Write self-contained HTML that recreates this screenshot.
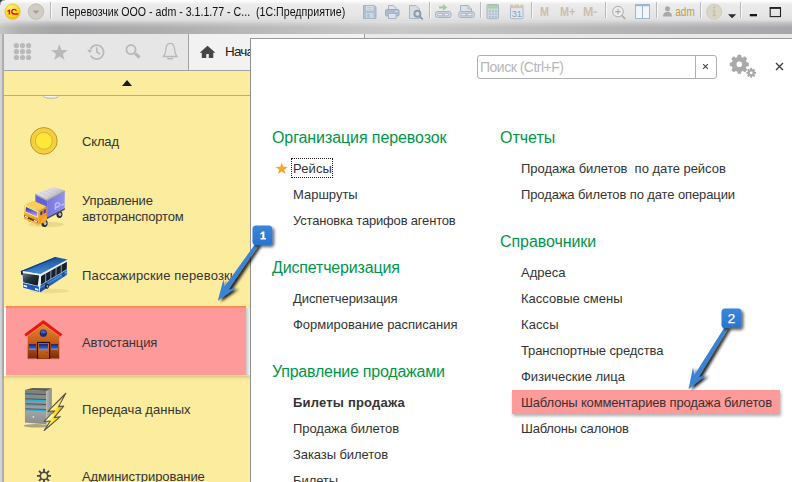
<!DOCTYPE html>
<html>
<head>
<meta charset="utf-8">
<style>
html,body{margin:0;padding:0;}
body{width:792px;height:482px;overflow:hidden;position:relative;background:#fff;font-family:"Liberation Sans",sans-serif;color:#2b2b2b;}
.abs{position:absolute;}
.t{position:absolute;white-space:nowrap;font-size:13px;line-height:16px;letter-spacing:-0.18px;color:#343434;}
.h{position:absolute;white-space:nowrap;font-size:16px;line-height:20px;letter-spacing:-0.16px;color:#00964a;}
.sb{position:absolute;white-space:nowrap;font-size:13px;line-height:16px;letter-spacing:-0.15px;color:#343434;}
</style>
</head>
<body>
<!-- title bar -->
<div class="abs" id="titlebar" style="left:0;top:0;width:792px;height:34px;background:linear-gradient(#ffffff 0,#f8f8f8 2px,#ececec 4px,#e8e8e8 12px,#e0e0e0 20px,#d4d4d4 21px);"></div>
<div class="abs" id="band" style="left:0;top:21px;width:792px;height:13px;background:linear-gradient(rgba(255,255,255,0.500) 0,rgba(255,255,255,0.220) 3px,rgba(255,255,255,0) 7px),linear-gradient(90deg,#c4c4c4 0,#b0b0b0 2.500%,#a5a5a7 7%,#adadaf 20%,#bbbbbb 35%,#c9c9c9 50%,#c0c0c0 62%,#b4b4b6 78%,#a7a7ab 100%);"></div>
<div class="abs" style="left:0;top:34px;width:4px;height:448px;background:linear-gradient(90deg,#d6d6d6 0,#d0d0d0 1.500px,#b2b2b8 2px,#acacb2 3.500px,#c0c0c0 4px);"></div>
<svg class="abs" style="left:0;top:0" width="6" height="6" viewBox="0 0 6 6"><path d="M0 0h4.500A4.500 4.500 0 0 0 0 4.500z" fill="#3a3a3a"/><path d="M0 5A5 5 0 0 1 5 0" fill="none" stroke="#8a8a8a" stroke-width="0.800"/></svg>
<!-- 1C logo -->
<svg class="abs" style="left:4px;top:3px" width="18" height="18" viewBox="0 0 18 18"><defs><radialGradient id="lg" cx="0.42" cy="0.32" r="0.75"><stop offset="0" stop-color="#fff58a"/><stop offset="0.55" stop-color="#fde022"/><stop offset="1" stop-color="#eab600"/></radialGradient></defs><circle cx="8.600" cy="8.600" r="7.700" fill="url(#lg)" stroke="#e4b41c" stroke-width="0.600"/><path d="M3.400 7.800l1.700-1.300h1.100v5.100h-1.600v-3.300l-1.200 0.700z" fill="#e01018"/><path d="M12.300 8.100a2.300 2.300 0 1 0 -2.300 2.900h4.300" fill="none" stroke="#e01018" stroke-width="1.350"/></svg>
<svg class="abs" style="left:27px;top:3px" width="18" height="18" viewBox="0 0 18 18"><circle cx="9" cy="8.6" r="7.8" fill="#d2cdc4" stroke="#bdb7ac" stroke-width="0.8"/><path d="M5.6 7.4h6.8L9 11z" fill="#a39d92"/></svg>
<div class="abs" style="left:50px;top:2px;width:1px;height:17px;background:#b8b8b8;"></div>
<div class="abs" style="left:51px;top:2px;width:1px;height:17px;background:#fafafa;"></div>
<div class="abs" id="title" style="left:61px;top:4px;font-size:12px;line-height:16px;color:#111;white-space:nowrap;transform:scaleX(0.886);transform-origin:0 0;">Перевозчик ООО - adm - 3.1.1.77 - С...&nbsp; (1С:Предприятие)</div>


<!-- titlebar icons -->
<svg class="abs" style="left:0;top:0" width="792" height="34" viewBox="0 0 792 34" font-family="Liberation Sans">
<g stroke="#b9b9b9" stroke-width="1">
<path d="M429.5 2v16M480.5 2v16M531.5 2v16M605.5 2v16M656.5 2v16M700.5 2v16M740.5 2v16"/>
</g>
<g stroke="#f8f8f8" stroke-width="1">
<path d="M430.5 2v16M481.5 2v16M532.5 2v16M606.5 2v16M657.5 2v16M701.5 2v16M741.5 2v16"/>
</g>
<!-- floppy -->
<path d="M363.5 5.5h11l1.5 1.5v11.5h-12.5z" fill="#afc0d3" stroke="#a2b4c9"/>
<rect x="366" y="6" width="7.5" height="4.6" fill="#d9e0e9"/><path d="M367 7.500h5.500M367 9.200h5.500" stroke="#b4c2d2" stroke-width="0.700"/>
<rect x="366" y="13" width="7.5" height="5" fill="#ced8dc"/>
<rect x="367.3" y="14" width="2" height="3.4" fill="#a3b9d0"/>
<!-- printer -->
<path d="M388.500 10v-4.500h5l2.500 2.500v2z" fill="#dfe3e8" stroke="#a6b5c7"/>
<rect x="385.5" y="9.5" width="13.5" height="6.5" rx="1.2" fill="#acbbcd" stroke="#9aacc1"/><rect x="395.500" y="10.800" width="2" height="1" fill="#e8edf2"/>
<rect x="388.5" y="13.5" width="7.5" height="5" fill="#dfe3e8" stroke="#a6b5c7"/>
<!-- preview -->
<path d="M409.5 5.5h6.5l3.5 3.500v9.500h-10z" fill="#d9dde3" stroke="#a6b5c7"/>
<circle cx="417.400" cy="13.800" r="3" fill="#d9dde3" stroke="#8a9aad" stroke-width="1.900"/>
<path d="M419.800 16.400l2.400 2.500" stroke="#8a9aad" stroke-width="2" stroke-linecap="round"/>
<!-- tray arrow -->
<path d="M439 6.300h4v-2.300l4.300 3.400-4.300 3.400v-2.300h-4z" fill="#a3cb9f"/>
<rect x="435.500" y="11.500" width="15.500" height="6" rx="2" fill="#d2dae4" stroke="#a3b3c6"/>
<rect x="437.700" y="13.300" width="11.100" height="2.500" rx="0.800" fill="#eef1f5" stroke="#93a5ba" stroke-width="0.800"/>
<rect x="441.800" y="13.600" width="2.900" height="1.900" fill="#b4c1d0"/>
<!-- tray page -->
<path d="M460.500 11.500v-6h7.500l3.500 3.500v2.500z" fill="#dde1e6" stroke="#a3b3c6"/>
<path d="M468 5.500v3.500h3.500" fill="none" stroke="#a3b3c6" stroke-width="0.800"/>
<rect x="458.800" y="11.500" width="15.500" height="6" rx="2" fill="#d2dae4" stroke="#a3b3c6"/>
<rect x="461" y="13.300" width="11.100" height="2.500" rx="0.800" fill="#eef1f5" stroke="#93a5ba" stroke-width="0.800"/>
<rect x="465.100" y="13.600" width="2.900" height="1.900" fill="#b4c1d0"/>
<!-- calculator -->
<rect x="487" y="4.500" width="11.500" height="14.200" rx="1" fill="#ccd7e2" stroke="#a6b7c9"/>
<rect x="487.500" y="5" width="10.500" height="3.600" fill="#abd3a0"/>
<g fill="#a9b9ca"><rect x="489.2" y="10.4" width="1.6" height="1.6"/><rect x="489.2" y="13.2" width="1.6" height="1.6"/><rect x="489.2" y="16.0" width="1.6" height="1.6"/><rect x="492.2" y="10.4" width="1.6" height="1.6"/><rect x="492.2" y="13.2" width="1.6" height="1.6"/><rect x="492.2" y="16.0" width="1.6" height="1.6"/><rect x="495.2" y="10.4" width="1.6" height="1.6"/><rect x="495.2" y="13.2" width="1.6" height="1.6"/><rect x="495.2" y="16.0" width="1.6" height="1.6"/></g>
<!-- calendar -->
<rect x="510.500" y="5.500" width="12.500" height="13.200" rx="1" fill="#e2e7ed" stroke="#a6b7c9"/>
<rect x="510.500" y="4.600" width="12.500" height="3.600" fill="#d4c4b6"/>
<rect x="513.200" y="3.800" width="1.200" height="2.400" fill="#f0ece8"/><rect x="519.200" y="3.800" width="1.200" height="2.400" fill="#f0ece8"/>
<text x="516.800" y="17.200" font-size="9.500" text-anchor="middle" fill="#919dab" letter-spacing="-0.300">31</text>
<!-- M -->
<g font-weight="bold" font-size="12" fill="#cfbcb0">
<text x="540" y="16.400" textLength="9" lengthAdjust="spacingAndGlyphs">M</text>
<text x="560" y="16.400" textLength="15.500" lengthAdjust="spacingAndGlyphs">M+</text>
<text x="583" y="16.400" textLength="14.500" lengthAdjust="spacingAndGlyphs">M-</text>
</g>
<!-- zoom -->
<circle cx="618" cy="11.600" r="5.300" fill="#eeeeee" stroke="#ababab" stroke-width="1"/>
<path d="M615.200 11.600h5.600M618 8.800v5.600" stroke="#ababab" stroke-width="1.100"/>
<path d="M622 15.800l2.800 2.800" stroke="#ababab" stroke-width="1.600" stroke-linecap="round"/>
<!-- panel -->
<rect x="635.500" y="4.500" width="14" height="14" fill="#f3f5f8" stroke="#9db7d2"/>
<rect x="635" y="4" width="15" height="2.200" fill="#9db7d2"/>
<path d="M642.500 6v12.500" stroke="#9db7d2"/>
<!-- person -->
<circle cx="667.500" cy="8.800" r="2.500" fill="#a9a9a9"/>
<path d="M663 16.400c0-3 1.800-4.600 4.500-4.600s4.500 1.600 4.500 4.600z" fill="#a9a9a9"/>
<text x="675.300" y="16" font-size="12" fill="#c29d3e" textLength="19.500" lengthAdjust="spacingAndGlyphs">adm</text>
<!-- info -->
<circle cx="714.100" cy="11.700" r="7.600" fill="#dcd5c7" stroke="#cfc7b7" stroke-width="0.800"/>
<circle cx="714.300" cy="7.600" r="1.200" fill="#bcc7a6"/>
<path d="M712.400 10h2.800v5.200h1v1h-4v-1h1.200v-4.200h-1z" fill="#bcc7a6"/>
<!-- dropdown -->
<path d="M728 14.200h8.200l-4.100 4z" fill="#2a2a2a"/>
<rect x="749.800" y="14" width="7.200" height="2.300" fill="#161616"/>
<rect x="770.200" y="8" width="10.300" height="8.600" fill="none" stroke="#222" stroke-width="1.100"/>
<rect x="769.700" y="7" width="11.300" height="1.800" fill="#222"/>
</svg>

<!-- toolbar -->
<div class="abs" style="left:4px;top:34px;width:184px;height:36px;background:#e6e6e6;"></div>
<div class="abs" style="left:188px;top:34px;width:1px;height:36px;background:#a2a2a4;"></div>
<div class="abs" style="left:189px;top:34px;width:175px;height:37px;background:#f2f2f2;"></div>
<div class="abs" style="left:364px;top:34px;width:1px;height:36px;background:#9a9a9a;"></div>
<div class="abs" style="left:365px;top:34px;width:427px;height:36px;background:#e9e9e9;"></div>
<div class="abs" style="left:4px;top:70px;width:246px;height:1px;background:#a2a2a6;"></div>


<!-- toolbar icons -->
<svg class="abs" style="left:0;top:0" width="792" height="72" viewBox="0 0 792 72">
<g fill="#b9b9b9"><circle cx="16.4" cy="45.6" r="2.6"/><circle cx="16.4" cy="51.6" r="2.6"/><circle cx="16.4" cy="57.5" r="2.6"/><circle cx="22.5" cy="45.6" r="2.6"/><circle cx="22.5" cy="51.6" r="2.6"/><circle cx="22.5" cy="57.5" r="2.6"/><circle cx="28.6" cy="45.6" r="2.6"/><circle cx="28.6" cy="51.6" r="2.6"/><circle cx="28.6" cy="57.5" r="2.6"/></g>
<polygon points="59.40,44.20 61.52,50.09 67.77,50.28 62.82,54.11 64.57,60.12 59.40,56.60 54.23,60.12 55.98,54.11 51.03,50.28 57.28,50.09" fill="#b9b9b9"/>
<g fill="none" stroke="#b9b9b9" stroke-width="1.7">
<path d="M90.3 49.2A7 7 0 1 1 90.6 55.6"/>
<path d="M96.9 47.2v4.8l3.2 2.2" stroke-width="1.6"/>
</g>
<path d="M87.200 49.800h5.200l-2.600 3.400z" fill="#b9b9b9"/>
<circle cx="131" cy="49.6" r="4.6" fill="none" stroke="#b9b9b9" stroke-width="1.8"/>
<path d="M134.300 52.900l1 0.900" stroke="#b9b9b9" stroke-width="1.600"/><path d="M135.300 53.600l4.300 3.900" stroke="#b9b9b9" stroke-width="3.200"/>
<path d="M170.200 43.400c-2.500 0-3.800 2.100-4.200 4.900l-0.700 4.400c-0.300 1.600-1.100 2.700-2.100 3.800h14c-1-1.100-1.800-2.200-2.100-3.800l-0.700-4.400c-0.400-2.800-1.700-4.900-4.200-4.900z" fill="none" stroke="#b9b9b9" stroke-width="1.300" stroke-linejoin="round"/>
<path d="M167.300 58.300c1.800 0.700 4 0.700 5.800 0" fill="none" stroke="#b9b9b9" stroke-width="1.500"/>
<!-- home -->
<path d="M207.5 45.7l7.9 7h-2.1v5.4h-4.5v-4h-2.5v4h-4.5v-5.4h-2.1z" fill="#464646"/>
</svg>
<div class="abs" style="left:225px;top:44px;font-size:13.500px;line-height:16px;color:#222;white-space:nowrap;letter-spacing:-0.800px;">Нача</div>

<!-- sidebar -->
<div class="abs" id="sidebar" style="left:4px;top:71px;width:246px;height:411px;background:#fbec9e;"></div>
<div class="abs" style="left:4px;top:95px;width:246px;height:1px;background:#b9ae74;"></div>
<svg class="abs" style="left:40px;top:96px" width="22" height="4" viewBox="40 96 22 4"><path d="M43.200 96h15.400c-1.500 1.800-4 2.200-7.700 2.200s-6.200-0.400-7.700-2.200z" fill="#f4f4f6"/><path d="M43.200 96.200c1.500 1.600 4 2 7.700 2s6.200-0.400 7.700-2" fill="none" stroke="#9a9aa0" stroke-width="0.700"/></svg>
<div class="abs" style="left:122px;top:80px;width:0;height:0;border-left:5px solid transparent;border-right:5px solid transparent;border-bottom:6px solid #1a1a1a;"></div>

<!-- highlight -->
<div class="abs" style="left:4px;top:308px;width:246px;height:68px;background:#fdfdfd;box-shadow:0 1px 3px rgba(120,100,40,0.350);"></div>
<div class="abs" style="left:246px;top:308px;width:4px;height:68px;background:linear-gradient(90deg,#c4c8c8,#f6f6f6);"></div>
<div class="abs" style="left:6px;top:375px;width:244px;height:1px;background:#d6d6d6;"></div>
<div class="abs" id="hl1" style="left:6px;top:306px;width:240px;height:69px;background:#ff9a9a;"></div>
<div class="abs" style="left:6px;top:306px;width:240px;height:2px;background:#ff8a52;"></div>

<div class="sb" style="left:82px;top:134px;">Склад</div>
<div class="sb" style="left:82px;top:193px;">Управление</div>
<div class="sb" style="left:82px;top:209px;">автотранспортом</div>
<div class="sb" style="left:82px;top:268px;letter-spacing:0.16px;">Пассажирские перевозки</div>
<div class="sb" style="left:82px;top:335px;">Автостанция</div>
<div class="sb" style="left:82px;top:402px;letter-spacing:0.05px;">Передача данных</div>
<div class="sb" style="left:82px;top:469px;letter-spacing:-0.07px;">Администрирование</div>


<!-- sidebar icons -->
<svg class="abs" style="left:10px;top:110px" width="80" height="60" viewBox="0 0 643 482">
<circle cx="272" cy="248" r="107" fill="#f6cf3e" stroke="#b8982a" stroke-width="8"/>
<circle cx="272" cy="248" r="68" fill="#fde838" stroke="#d6ac30" stroke-width="7"/>
</svg>

<svg class="abs" style="left:20px;top:182px" width="50" height="50" viewBox="0 0 482 482">
<defs>
<linearGradient id="trRoof" x1="0" y1="0" x2="1" y2="0.600"><stop offset="0" stop-color="#f2f2f4"/><stop offset="0.600" stop-color="#d4d4da"/><stop offset="1" stop-color="#a6a6b0"/></linearGradient>
<linearGradient id="trSide" x1="0" y1="0" x2="1" y2="0"><stop offset="0" stop-color="#7676e2"/><stop offset="1" stop-color="#9292ee"/></linearGradient>
<linearGradient id="trCab" x1="0" y1="0" x2="0" y2="1"><stop offset="0" stop-color="#ffc038"/><stop offset="1" stop-color="#f08c10"/></linearGradient>
<linearGradient id="trWin" x1="0" y1="0" x2="0" y2="1"><stop offset="0" stop-color="#30308c"/><stop offset="1" stop-color="#b4b4ee"/></linearGradient>
</defs>
<ellipse cx="250" cy="410" rx="170" ry="26" fill="#c8b86c" opacity="0.350"/>
<!-- wheels -->
<ellipse cx="380" cy="312" rx="29" ry="35" fill="#26262a"/><ellipse cx="385" cy="312" rx="14" ry="19" fill="#bcbcc4"/>
<ellipse cx="236" cy="398" rx="30" ry="36" fill="#26262a"/><ellipse cx="242" cy="398" rx="14" ry="20" fill="#bcbcc4"/>
<ellipse cx="92" cy="360" rx="16" ry="22" fill="#26262a"/>
<!-- chassis -->
<polygon points="258,336 432,248 432,268 258,358" fill="#4c4c54"/>
<!-- box -->
<polygon points="148,116 264,172 264,336 148,256" fill="#6262d6"/>
<polygon points="262,172 432,86 430,252 262,342" fill="url(#trSide)"/>
<polygon points="148,112 330,48 432,82 262,170" fill="url(#trRoof)"/>
<path d="M190,97 L300,150 M232,82 L340,131 M276,67 L380,111" stroke="#bcbcc6" stroke-width="6" fill="none" opacity="0.800"/>
<polygon points="148,112 262,168 262,182 148,126" fill="#b2b2bc"/>
<polygon points="262,168 432,82 432,94 262,182" fill="#9c9ca8"/>
<path d="M342 268 v-58 c28,-22 52,-4 34,22 l-26,14 M398 226 l24,-14" stroke="#c4c4f8" stroke-width="15" fill="none" opacity="0.850"/>
<!-- cab -->
<polygon points="50,216 130,180 256,236 186,278" fill="#ffcc52"/>
<polygon points="44,222 184,280 176,412 38,338" fill="url(#trCab)"/>
<polygon points="184,280 256,238 258,346 246,382 176,412" fill="#f59c1c"/>
<path d="M176,412 L246,382 L258,346 L258,330 C225,335 205,360 200,400 Z" fill="#f8ac28"/>
<polygon points="50,230 178,286 170,344 44,288" fill="#ececf6"/>
<polygon points="58,242 170,292 164,334 52,284" fill="url(#trWin)"/>
<polygon points="196,290 216,278 216,312 196,324" fill="#3a3a94"/>
<polygon points="228,270 248,258 248,294 228,306" fill="#3a3a94"/>
<polygon points="40,318 172,378 172,398 40,338" fill="#5a3e1e"/>
<polygon points="46,324 78,338 78,350 46,336" fill="#f4f8ff"/>
<polygon points="134,364 166,378 166,392 134,378" fill="#e4eeff"/>
<polygon points="38,338 174,400 174,418 38,356" fill="#ffb838"/>
</svg>

<svg class="abs" style="left:18px;top:250px" width="54" height="50" viewBox="0 0 521 482">
<defs>
<linearGradient id="busRoof" x1="0.300" y1="0" x2="0.600" y2="1"><stop offset="0" stop-color="#16448a"/><stop offset="0.500" stop-color="#2a6cb8"/><stop offset="1" stop-color="#4e94d8"/></linearGradient>
<linearGradient id="busLow" x1="0" y1="0" x2="0" y2="1"><stop offset="0" stop-color="#3484da"/><stop offset="1" stop-color="#154698"/></linearGradient>
<linearGradient id="busWs" x1="0" y1="0" x2="1" y2="1"><stop offset="0" stop-color="#6c8890"/><stop offset="0.450" stop-color="#24343c"/><stop offset="1" stop-color="#0c141a"/></linearGradient>
</defs>
<ellipse cx="300" cy="395" rx="190" ry="22" fill="#c8b86c" opacity="0.300"/>
<!-- side -->
<polygon points="213,232 478,92 475,238 208,412" fill="#f0f4f8"/>
<polygon points="224,250 472,112 471,186 220,336" fill="#18222c"/>
<path d="M268,226 L266,308 M318,198 L316,278 M368,170 L366,248 M418,142 L417,218" stroke="#d4dde6" stroke-width="6"/>
<polygon points="218,340 474,188 474,238 208,412" fill="url(#busLow)"/>
<polygon points="216,360 474,208 474,218 216,372" fill="#8cc0f0" opacity="0.500"/>
<!-- roof -->
<polygon points="36,200 360,68 478,92 213,234" fill="url(#busRoof)"/>
<polygon points="36,200 360,68 376,71 58,204" fill="#123c80"/>
<!-- front -->
<polygon points="28,204 215,232 210,412 46,366" fill="#eef2f6"/>
<polygon points="42,222 204,246 190,344 50,312" fill="url(#busWs)"/>
<polygon points="48,318 200,352 206,406 50,364" fill="#1c5cb8"/>
<polygon points="54,336 88,345 88,362 54,353" fill="#f0f6ff"/>
<polygon points="164,366 198,375 198,394 164,384" fill="#f0f6ff"/>
<polygon points="26,202 44,196 48,238 32,242" fill="#18181c"/>
<polygon points="222,262 234,256 236,300 224,306" fill="#18181c"/>
<!-- wheels -->
<ellipse cx="280" cy="350" rx="18" ry="27" fill="#1a1a1e"/><ellipse cx="284" cy="350" rx="8" ry="13" fill="#a0a6ae"/>
<ellipse cx="440" cy="236" rx="12" ry="19" fill="#1a1a1e"/><ellipse cx="443" cy="236" rx="5" ry="9" fill="#a0a6ae"/>
</svg>

<svg class="abs" style="left:10px;top:310px" width="80" height="60" viewBox="0 0 643 482">
<defs>
<linearGradient id="hsBody" x1="0" y1="0" x2="0" y2="1"><stop offset="0" stop-color="#e88a34"/><stop offset="0.55" stop-color="#c45a16"/><stop offset="1" stop-color="#7a2c08"/></linearGradient>
<linearGradient id="hsWin" x1="0" y1="0" x2="0" y2="1"><stop offset="0" stop-color="#16207a"/><stop offset="0.6" stop-color="#2a56b8"/><stop offset="1" stop-color="#6a9ee4"/></linearGradient>
<linearGradient id="hsDoor" x1="0" y1="0" x2="0" y2="1"><stop offset="0" stop-color="#e0782a"/><stop offset="1" stop-color="#a84810"/></linearGradient>
</defs>
<polygon points="142,205 268,108 396,205 396,392 142,392" fill="url(#hsBody)"/>
<rect x="140" y="386" width="258" height="10" fill="#c8706a" opacity="0.5"/>
<path d="M122,204 L268,96 L414,204" fill="none" stroke="#e81818" stroke-width="24" stroke-linejoin="miter"/>
<path d="M150,186 L268,98 L386,186" fill="none" stroke="#ff9a2a" stroke-width="6" opacity="0.8" transform="translate(0,18)"/>
<circle cx="268" cy="186" r="29" fill="#1a2a78"/>
<ellipse cx="268" cy="176" rx="22" ry="13" fill="#5a7ad0" opacity="0.7"/>
<rect x="152" y="274" width="58" height="46" fill="url(#hsWin)"/>
<rect x="330" y="274" width="56" height="46" fill="url(#hsWin)"/>
<rect x="217" y="256" width="106" height="136" fill="#1c0c04"/>
<rect x="226" y="266" width="88" height="126" fill="url(#hsDoor)"/>
<rect x="232" y="272" width="74" height="50" fill="url(#hsWin)"/>
<rect x="292" y="338" width="10" height="5" fill="#7a2c08"/>
</svg>

<svg class="abs" style="left:10px;top:375px" width="80" height="60" viewBox="0 0 643 482">
<defs>
<linearGradient id="svFront" x1="0" y1="0" x2="0" y2="1"><stop offset="0" stop-color="#7c7c7c"/><stop offset="0.6" stop-color="#a4a4a4"/><stop offset="1" stop-color="#8c8c8c"/></linearGradient>
<linearGradient id="svSide" x1="0" y1="0" x2="1" y2="0"><stop offset="0" stop-color="#b4b4b4"/><stop offset="1" stop-color="#8c8c8c"/></linearGradient>
<linearGradient id="ltn" x1="0" y1="0" x2="1" y2="0"><stop offset="0" stop-color="#fff6a0"/><stop offset="0.5" stop-color="#ffe21c"/><stop offset="1" stop-color="#e8a800"/></linearGradient>
</defs>
<ellipse cx="215" cy="408" rx="105" ry="14" fill="#6c6c5c" opacity="0.55"/>
<polygon points="120,384 290,398 338,338 330,330" fill="#d8d8d8"/>
<polygon points="120,120 292,128 292,396 120,382" fill="url(#svFront)"/>
<polygon points="292,128 336,106 336,332 292,396" fill="url(#svSide)"/>
<polygon points="120,120 180,104 336,106 292,128" fill="#5c5c5c"/>
<g stroke="#1cb4e4" stroke-width="9"><path d="M124,160 L290,166 M124,200 L290,206 M124,240 L290,246 M124,280 L290,286"/></g>
<g stroke="#3c3c3c" stroke-width="6"><path d="M124,151 L290,157 M124,191 L290,197 M124,231 L290,237 M124,271 L290,277"/></g>
<circle cx="188" cy="336" r="7" fill="#e8e8e8"/>
<g fill="#8a8a8a"><circle cx="304" cy="170" r="3"/><circle cx="318" cy="162" r="3"/><circle cx="304" cy="200" r="3"/><circle cx="318" cy="192" r="3"/><circle cx="304" cy="230" r="3"/><circle cx="318" cy="222" r="3"/></g>
<polygon points="448.600,146.700 305,292.700 358.800,288.800 274.300,373.300 324.200,369.500 274.300,446.300 404.800,334.900 354.900,342.600 431.700,250.400 389.500,254.300" fill="url(#ltn)" stroke="#5a5648" stroke-width="9" stroke-linejoin="round"/><polygon points="420,186 322,284 368,278 396,240" fill="#fffbe0" opacity="0.550"/><polygon points="340,306 290,366 328,360 350,330" fill="#fffbe0" opacity="0.650"/>
</svg>

<svg class="abs" style="left:34px;top:466px" width="20" height="16" viewBox="34 466 20 16">
<g stroke="#484848" stroke-width="1.900" stroke-linecap="butt">
<path d="M44 468.700v14M37 475.900h14M39 470.900l10 10M49 470.900l-10 10"/>
</g>
<circle cx="44" cy="475.900" r="4.500" fill="#484848"/>
<circle cx="44" cy="475.900" r="2.900" fill="#fbec9e"/>
</svg>

<!-- popup -->
<div class="abs" id="popup" style="left:250px;top:38px;width:542px;height:444px;background:#fff;border-left:1px solid #8f8f8f;border-top:1px solid #9a9a9a;box-sizing:border-box;"></div>

<!-- search -->
<div class="abs" style="left:477px;top:55px;width:240px;height:24px;box-sizing:border-box;border:1px solid #afafaf;border-radius:3px;background:#fff;"></div>
<div class="abs" style="left:695px;top:55px;width:1px;height:24px;background:#afafaf;"></div>
<div class="abs" style="left:480px;top:59px;font-size:14px;line-height:16px;color:#b6b6ba;letter-spacing:-0.500px;white-space:nowrap;">Поиск (Ctrl+F)</div>


<svg class="abs" style="left:690px;top:45px" width="102" height="45" viewBox="690 45 102 45">
<path d="M703.100 64.100l4.800 4.800M707.900 64.100l-4.800 4.800" stroke="#444" stroke-width="1.050" fill="none"/>
<path d="M737.18,57.00 L737.63,54.74 L740.97,54.74 L741.42,57.00 L742.96,57.64 L744.88,56.36 L747.24,58.72 L745.96,60.64 L746.60,62.18 L748.86,62.63 L748.86,65.97 L746.60,66.42 L745.96,67.96 L747.24,69.88 L744.88,72.24 L742.96,70.96 L741.42,71.60 L740.97,73.86 L737.63,73.86 L737.18,71.60 L735.64,70.96 L733.72,72.24 L731.36,69.88 L732.64,67.96 L732.00,66.42 L729.74,65.97 L729.74,62.63 L732.00,62.18 L732.64,60.64 L731.36,58.72 L733.72,56.36 L735.64,57.64Z M742.1 64.300a2.800 2.800 0 1 0 -5.600 0a2.800 2.800 0 1 0 5.600 0z" fill="#a9a9a9" fill-rule="evenodd"/>
<path d="M750.17,69.25 L750.34,67.87 L752.06,67.87 L752.23,69.25 L752.98,69.56 L754.08,68.71 L755.29,69.92 L754.44,71.02 L754.75,71.77 L756.13,71.94 L756.13,73.66 L754.75,73.83 L754.44,74.58 L755.29,75.68 L754.08,76.89 L752.98,76.04 L752.23,76.35 L752.06,77.73 L750.34,77.73 L750.17,76.35 L749.42,76.04 L748.32,76.89 L747.11,75.68 L747.96,74.58 L747.65,73.83 L746.27,73.66 L746.27,71.94 L747.65,71.77 L747.96,71.02 L747.11,69.92 L748.32,68.71 L749.42,69.56Z M752.600 72.800a1.400 1.400 0 1 0 -2.800 0a1.400 1.400 0 1 0 2.800 0z" fill="#a9a9a9" stroke="#fff" stroke-width="0.900" paint-order="stroke" fill-rule="evenodd"/>
<path d="M776 63l7 7M783 63l-7 7" stroke="#3a3a3a" stroke-width="1.250" fill="none"/>
</svg>


<svg class="abs" style="left:270px;top:155px" width="70" height="26" viewBox="270 155 70 26">
<polygon points="281.70,162.50 283.23,166.80 287.79,166.92 284.17,169.70 285.46,174.08 281.70,171.50 277.94,174.08 279.23,169.70 275.61,166.92 280.17,166.80" fill="#f8a62a"/>

</svg>

<div class="abs" style="left:291px;top:158px;width:42px;height:20px;box-sizing:border-box;border:1px dotted #1a1a1a;"></div>
<!-- headings col 1 -->
<div class="h" style="left:272px;top:128px;letter-spacing:-0.09px;">Организация перевозок</div>
<div class="t" style="left:293px;top:161px;letter-spacing:0.12px;">Рейсы</div>
<div class="t" style="left:293px;top:187px;letter-spacing:-0.01px;">Маршруты</div>
<div class="t" style="left:293px;top:213px;letter-spacing:-0.18px;">Установка тарифов агентов</div>
<div class="h" style="left:272px;top:258px;">Диспетчеризация</div>
<div class="t" style="left:293px;top:291px;letter-spacing:-0.09px;">Диспетчеризация</div>
<div class="t" style="left:293px;top:317px;letter-spacing:-0.01px;">Формирование расписания</div>
<div class="h" style="left:272px;top:362px;letter-spacing:-0.23px;">Управление продажами</div>
<div class="t" style="left:293px;top:395px;font-weight:bold;letter-spacing:0.19px;">Билеты продажа</div>
<div class="t" style="left:293px;top:421px;letter-spacing:-0.05px;">Продажа билетов</div>
<div class="t" style="left:293px;top:447px;letter-spacing:-0.08px;">Заказы билетов</div>
<div class="t" style="left:293px;top:473px;letter-spacing:-0.08px;">Билеты</div>

<!-- col 2 -->
<div class="h" style="left:500px;top:128px;letter-spacing:0px;">Отчеты</div>
<div class="t" style="left:521px;top:161px;letter-spacing:-0.03px;">Продажа билетов&nbsp; по дате рейсов</div>
<div class="t" style="left:521px;top:187px;letter-spacing:-0.11px;">Продажа билетов по дате операции</div>
<div class="h" style="left:500px;top:232px;letter-spacing:-0.08px;">Справочники</div>
<div class="t" style="left:521px;top:265px;letter-spacing:0px;">Адреса</div>
<div class="t" style="left:521px;top:291px;letter-spacing:0.01px;">Кассовые смены</div>
<div class="t" style="left:521px;top:317px;letter-spacing:0.1px;">Кассы</div>
<div class="t" style="left:521px;top:343px;letter-spacing:-0.11px;">Транспортные средства</div>
<div class="t" style="left:521px;top:369px;letter-spacing:-0.02px;">Физические лица</div>
<div class="abs" id="hl2" style="left:512px;top:390px;width:268px;height:24px;background:#ff9a9a;box-shadow:1px 2px 3px rgba(0,0,0,0.320);"></div>
<div class="t" style="left:521px;top:395px;letter-spacing:-0.15px;">Шаблоны комментариев продажа билетов</div>
<div class="t" style="left:521px;top:421px;letter-spacing:-0.22px;">Шаблоны салонов</div>


<!-- annotations -->
<svg class="abs" style="left:0;top:0" width="792" height="482" viewBox="0 0 792 482">
<defs>
<filter id="ds" x="-30%" y="-30%" width="180%" height="180%"><feGaussianBlur in="SourceAlpha" stdDeviation="1.4"/><feOffset dx="2.800" dy="1.400"/><feComponentTransfer><feFuncA type="linear" slope="0.900"/></feComponentTransfer><feMerge><feMergeNode/><feMergeNode in="SourceGraphic"/></feMerge></filter>
<filter id="ds2" x="-30%" y="-30%" width="180%" height="180%"><feGaussianBlur in="SourceAlpha" stdDeviation="1.700"/><feOffset dx="1.600" dy="1.600"/><feComponentTransfer><feFuncA type="linear" slope="0.620"/></feComponentTransfer><feMerge><feMergeNode/><feMergeNode in="SourceGraphic"/></feMerge></filter>
<linearGradient id="cb" x1="0" y1="0" x2="0" y2="1"><stop offset="0" stop-color="#3a86dc"/><stop offset="1" stop-color="#2a74cc"/></linearGradient>
</defs>
<polygon points="255.5,243.6 224.6,286.6 223.5,279.2 217.8,300.8 236.0,287.9 228.7,289.5 258.1,245.4" fill="#3b82d2" filter="url(#ds)"/>
<polygon points="724.9,326.7 694.5,374.7 693.0,367.3 688.5,389.2 706.0,375.3 698.7,377.3 727.7,328.3" fill="#3b82d2" filter="url(#ds)"/>
<rect x="252.500" y="225.600" width="19.700" height="19.400" rx="3.600" fill="url(#cb)" filter="url(#ds2)"/>
<rect x="721.500" y="308.500" width="20" height="19.500" rx="3.600" fill="url(#cb)" filter="url(#ds2)"/>
<path d="M260.300 233.400l2.400-1.800h1.700v6.400h1.500v1.600h-5.400v-1.600h1.800v-4.300l-2 1.100z" fill="#fff"/>
<text x="727.800" y="323" font-family="Liberation Sans" font-size="12.500" fill="#fff" stroke="#fff" stroke-width="0.250" textLength="7.400" lengthAdjust="spacingAndGlyphs">2</text>
</svg>

</body>
</html>
